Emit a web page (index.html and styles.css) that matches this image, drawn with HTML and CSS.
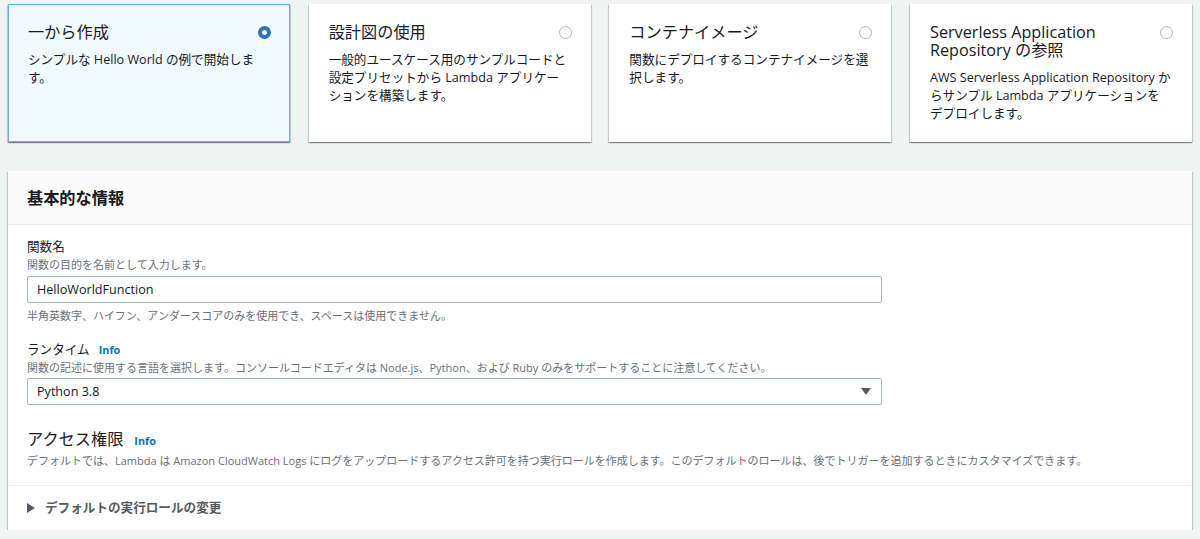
FILE: index.html
```html
<!DOCTYPE html>
<html lang="ja">
<head>
<meta charset="utf-8">
<link rel="stylesheet" href="styles.css">
</head>
<body>
<div class="tiles">
  <div class="tile selected">
    <div class="tile-head">
      <div class="tile-title">一から作成</div>
      <span class="radio on"></span>
    </div>
    <div class="tile-desc">シンプルな Hello World の例で開始します。</div>
  </div>
  <div class="tile">
    <div class="tile-head">
      <div class="tile-title">設計図の使用</div>
      <span class="radio"></span>
    </div>
    <div class="tile-desc">一般的ユースケース用のサンプルコードと設定プリセットから Lambda アプリケーションを構築します。</div>
  </div>
  <div class="tile">
    <div class="tile-head">
      <div class="tile-title">コンテナイメージ</div>
      <span class="radio"></span>
    </div>
    <div class="tile-desc">関数にデプロイするコンテナイメージを選択します。</div>
  </div>
  <div class="tile">
    <div class="tile-head">
      <div class="tile-title">Serverless Application Repository の参照</div>
      <span class="radio"></span>
    </div>
    <div class="tile-desc">AWS Serverless Application Repository からサンプル Lambda アプリケーションをデプロイします。</div>
  </div>
</div>

<div class="panel">
  <div class="panel-header">基本的な情報</div>
  <div class="panel-body">
    <div class="field">
      <div class="label">関数名</div>
      <div class="hint">関数の目的を名前として入力します。</div>
      <div class="input">HelloWorldFunction</div>
      <div class="hint constraint">半角英数字、ハイフン、アンダースコアのみを使用でき、スペースは使用できません。</div>
    </div>
    <div class="field runtime">
      <div class="label">ランタイム<a class="info">Info</a></div>
      <div class="hint">関数の記述に使用する言語を選択します。コンソールコードエディタは Node.js、Python、および Ruby のみをサポートすることに注意してください。</div>
      <div class="input select"><span>Python 3.8</span><span class="caret"></span></div>
    </div>
    <div class="field access">
      <div class="big-label">アクセス権限<a class="info">Info</a></div>
      <div class="hint">デフォルトでは、Lambda は Amazon CloudWatch Logs にログをアップロードするアクセス許可を持つ実行ロールを作成します。このデフォルトのロールは、後でトリガーを追加するときにカスタマイズできます。</div>
    </div>
  </div>
  <div class="expander"><span class="tri"></span>デフォルトの実行ロールの変更</div>
</div>
</body>
</html>
```

FILE: styles.css
```css
* { box-sizing: border-box; }
html, body { margin: 0; }
body {
  background: #f2f3f3;
  padding: 4px 8px 0;
  font-family: "Open Sans", "Noto Sans CJK JP", sans-serif;
  color: #16191f;
  font-size: 12.6px;
  line-height: 18px;
}
.tiles {
  display: grid;
  grid-template-columns: repeat(4, 1fr);
  column-gap: 18.7px;
}
.tile {
  height: 138px;
  background: #fff;
  border: 1px solid transparent;
  box-shadow: 0 1px 1px 0 rgba(0,28,36,.3), 1px 1px 1px 0 rgba(0,28,36,.15), -1px 1px 1px 0 rgba(0,28,36,.15);
  padding: 18px 18px 18px 19px;
}
.tile.selected {
  background: #f1faff;
  border-color: #5fb5d6;
}
.tile-head {
  display: flex;
  justify-content: space-between;
  align-items: flex-start;
  gap: 12px;
}
.tile-title {
  font-size: 16.2px;
  line-height: 18px;
}
.radio {
  flex: none;
  width: 13px;
  height: 13px;
  margin-top: 3px;
  border-radius: 50%;
  border: 1px solid #aab7b8;
  background: #fff;
}
.radio.on {
  border: 4px solid #2a73b8;
}
.tile-desc {
  margin-top: 10px;
  padding-right: 2px;
}
.panel {
  margin-top: 29px;
  background: #fff;
  box-shadow: 0 1px 1px 0 rgba(0,28,36,.3), 1px 1px 1px 0 rgba(0,28,36,.15), -1px 1px 1px 0 rgba(0,28,36,.15);
}
.panel-header {
  background: #fafafa;
  border-bottom: 1px solid #eaeded;
  padding: 18px 19px 17px;
  font-size: 16.2px;
  font-weight: bold;
  line-height: 18px;
}
.panel-body {
  padding: 13px 19px 17px;
  border-bottom: 1px solid #eaeded;
}
.label {
  line-height: 18px;
}
.hint {
  font-size: 11px;
  line-height: 14px;
  height: 14px;
  color: #687078;
  margin-top: 2px;
  white-space: nowrap;
}
.hint.constraint { margin-top: 6px; }
.input {
  margin-top: 4px;
  max-width: 855px;
  height: 27px;
  border: 1px solid #aab7b8;
  border-radius: 2px;
  padding: 0 9px;
  display: flex;
  align-items: center;
  font-size: 12.6px;
}
.select {
  margin-top: 3px;
  justify-content: space-between;
}
.caret {
  width: 0;
  height: 0;
  border-left: 5.5px solid transparent;
  border-right: 5.5px solid transparent;
  border-top: 7px solid #545b64;
  margin-right: 1px;
}
.runtime { margin-top: 18px; }
.access { margin-top: 25px; }
.access .hint { margin-top: 6px; }
.big-label {
  font-size: 16.2px;
  line-height: 18px;
}
.info {
  color: #0073bb;
  font-size: 10.8px;
  font-weight: bold;
  line-height: 1;
  margin-left: 9px;
}
.big-label .info { margin-left: 11px; }
.expander {
  padding: 13px 19px;
  line-height: 18px;
  font-weight: bold;
  color: #545b64;
  display: flex;
  align-items: center;
}
.tri {
  width: 0;
  height: 0;
  border-top: 5px solid transparent;
  border-bottom: 5px solid transparent;
  border-left: 8px solid #545b64;
  margin: 0 10px 0 0;
}
```
